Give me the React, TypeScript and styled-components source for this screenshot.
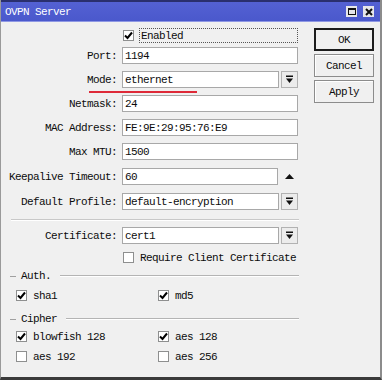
import React from "react";
import styled, { createGlobalStyle } from "styled-components";

const GlobalStyle = createGlobalStyle`
  html, body {
    margin: 0;
    padding: 0;
    background: #ffffff;
  }
  body {
    font-family: "Liberation Mono", "DejaVu Sans Mono", monospace;
    font-size: 11px;
    letter-spacing: -0.6px;
    color: #0c0c0c;
  }
`;

interface FieldDef {
  label: string;
  value: string;
  kind?: "dropdown" | "spin";
  top: number;
  marked?: boolean;
}

const fields: FieldDef[] = [
  { label: "Port:", value: "1194", top: 4 },
  { label: "Mode:", value: "ethernet", kind: "dropdown", top: 7, marked: true },
  { label: "Netmask:", value: "24", top: 7 },
  { label: "MAC Address:", value: "FE:9E:29:95:76:E9", top: 7 },
  { label: "Max MTU:", value: "1500", top: 7 },
  { label: "Keepalive Timeout:", value: "60", kind: "spin", top: 8 },
  { label: "Default Profile:", value: "default-encryption", kind: "dropdown", top: 8 },
];

const CheckIcon = () => (
  <svg width="9" height="9" viewBox="0 0 9 9">
    <path d="M1 4.5 L3.5 7 L8 1.5" fill="none" stroke="#000" strokeWidth="2" />
  </svg>
);

const DropIcon = () => (
  <svg width="9" height="9" viewBox="0 0 9 9">
    <rect x="1" y="0.5" width="7" height="1.5" fill="#111" />
    <path d="M1 3.5 H8 L4.5 8 Z" fill="#111" />
  </svg>
);

const UpIcon = () => (
  <svg width="9" height="5" viewBox="0 0 9 5">
    <path d="M0 5 H9 L4.5 0 Z" fill="#111" />
  </svg>
);

function Check({ checked, label }: { checked: boolean; label: string }) {
  return (
    <CheckLabel>
      <Box>{checked && <CheckIcon />}</Box>
      <span>{label}</span>
    </CheckLabel>
  );
}

function Group({
  title,
  items,
  gap,
}: {
  title: string;
  items: [string, boolean][];
  gap: number;
}) {
  return (
    <>
      <GroupHeader>
        <Dash />
        <span>{title}</span>
        <Rule />
      </GroupHeader>
      <GroupGrid $gap={gap}>
        {items.map(([name, on]) => (
          <Check key={name} checked={on} label={name} />
        ))}
      </GroupGrid>
    </>
  );
}

export default function App() {
  return (
    <>
      <GlobalStyle />
      <Window>
        <TitleBar>
          <Title>OVPN Server</Title>
          <TitleButtons>
            <TitleButton>
              <MaxGlyph />
            </TitleButton>
            <TitleButton>
              <svg width="8" height="8" viewBox="0 0 8 8">
                <path d="M1 1 L7 7 M7 1 L1 7" stroke="#111" strokeWidth="2" />
              </svg>
            </TitleButton>
          </TitleButtons>
        </TitleBar>
        <Body>
          <Form>
            <Row $top={0} $h={15}>
              <span />
              <EnabledBox>
                <Box>
                  <CheckIcon />
                </Box>
                <Focus>Enabled</Focus>
              </EnabledBox>
            </Row>
            {fields.map((f) => (
              <Row key={f.label} $top={f.top} $h={17}>
                <Label>{f.label}</Label>
                <FieldWrap>
                  <Input>{f.value}</Input>
                  {f.kind === "dropdown" && (
                    <DropButton>
                      <DropIcon />
                    </DropButton>
                  )}
                  {f.kind === "spin" && (
                    <SpinArrow>
                      <UpIcon />
                    </SpinArrow>
                  )}
                </FieldWrap>
                {f.marked && <Underline />}
              </Row>
            ))}
            <Separator />
            <Row $top={6} $h={17}>
              <Label>Certificate:</Label>
              <FieldWrap>
                <Input>cert1</Input>
                <DropButton>
                  <DropIcon />
                </DropButton>
              </FieldWrap>
            </Row>
            <Row $top={8} $h={11}>
              <span />
              <Check checked={false} label="Require Client Certificate" />
            </Row>
            <Spacer $h={7} />
            <Group
              title="Auth."
              gap={8}
              items={[
                ["sha1", true],
                ["md5", true],
              ]}
            />
            <Spacer $h={12} />
            <Group
              title="Cipher"
              gap={6}
              items={[
                ["blowfish 128", true],
                ["aes 128", true],
                ["aes 192", false],
                ["aes 256", false],
              ]}
            />
          </Form>
          <Actions>
            <Button $primary>OK</Button>
            <Button>Cancel</Button>
            <Button>Apply</Button>
          </Actions>
        </Body>
      </Window>
    </>
  );
}

const Window = styled.div`
  width: 382px;
  height: 380px;
  box-sizing: border-box;
  background: #f0f0f0;
  border-left: 1px solid #9a9a9a;
  border-right: 2px solid #8c8c8c;
  border-bottom: 3px solid #3a3a3a;
  display: flex;
  flex-direction: column;
  overflow: hidden;
`;

const TitleBar = styled.div`
  height: 22px;
  box-sizing: border-box;
  border-top: 2px solid #2a2f6e;
  border-bottom: 1px solid #8f98e4;
  background: linear-gradient(#5461d3, #4a58cc);
  display: flex;
  align-items: center;
  justify-content: space-between;
  padding: 0 5px 0 4px;
`;

const Title = styled.div`
  color: #ffffff;
  font-size: 11px;
`;

const TitleButtons = styled.div`
  display: flex;
  gap: 6px;
  padding-right: 1px;
`;

const TitleButton = styled.div`
  width: 11px;
  height: 11px;
  background: #e6e6ea;
  display: flex;
  align-items: center;
  justify-content: center;
`;

const MaxGlyph = styled.div`
  width: 8px;
  height: 7px;
  border: 1px solid #111;
  border-top-width: 2px;
  box-sizing: border-box;
`;

const Body = styled.div`
  display: flex;
  padding: 6px 0 0 0;
  gap: 15px;
`;

const Form = styled.div`
  width: 298px;
  display: flex;
  flex-direction: column;
`;

const Row = styled.div<{ $top: number; $h: number }>`
  position: relative;
  display: grid;
  grid-template-columns: 116px 176px;
  column-gap: 5px;
  height: ${(p) => p.$h}px;
  margin-top: ${(p) => p.$top}px;
  align-items: center;
`;

const Label = styled.div`
  text-align: right;
  white-space: nowrap;
`;

const FieldWrap = styled.div`
  display: flex;
  height: 100%;
  gap: 2px;
  align-items: center;
`;

const Input = styled.div`
  flex: 1;
  height: 100%;
  box-sizing: border-box;
  background: #ffffff;
  border: 1px solid #a8a8a8;
  padding-left: 2px;
  display: flex;
  align-items: center;
  white-space: nowrap;
`;

const DropButton = styled.div`
  width: 17px;
  height: 100%;
  box-sizing: border-box;
  background: #ececec;
  border: 1px solid #b2b2b2;
  display: flex;
  align-items: center;
  justify-content: center;
`;

const SpinArrow = styled.div`
  width: 17px;
  display: flex;
  justify-content: center;
  padding-left: 1px;
`;

const Underline = styled.div`
  position: absolute;
  left: 88px;
  bottom: -5px;
  width: 108px;
  height: 2px;
  background: #de2a38;
`;

const EnabledBox = styled.div`
  display: flex;
  align-items: center;
  gap: 5px;
  height: 100%;
  padding-left: 1px;
`;

const Focus = styled.div`
  flex: 1;
  height: 100%;
  box-sizing: border-box;
  border: 1px dotted #555;
  display: flex;
  align-items: center;
  padding-left: 1px;
`;

const Box = styled.div`
  width: 11px;
  height: 11px;
  box-sizing: border-box;
  background: #ffffff;
  border: 1px solid #8e8f8f;
  display: flex;
  align-items: center;
  justify-content: center;
  flex-shrink: 0;
`;

const CheckLabel = styled.div`
  display: flex;
  align-items: center;
  gap: 6px;
  height: 11px;
  white-space: nowrap;
  padding-left: 1px;
`;

const Separator = styled.div`
  margin: 9px 0 0 10px;
  height: 1px;
  background: #c8c8c8;
  border-bottom: 1px solid #ffffff;
`;

const Spacer = styled.div<{ $h: number }>`
  height: ${(p) => p.$h}px;
`;

const GroupHeader = styled.div`
  display: flex;
  align-items: center;
  height: 12px;
  padding-left: 9px;
  gap: 5px;
`;

const Dash = styled.div`
  width: 6px;
  height: 1px;
  background: #a0a0a0;
`;

const Rule = styled.div`
  flex: 1;
  height: 1px;
  margin-left: 4px;
  background: #b4b4b4;
  border-bottom: 1px solid #ffffff;
`;

const GroupGrid = styled.div<{ $gap: number }>`
  display: grid;
  grid-template-columns: 142px 142px;
  row-gap: 9px;
  padding: ${(p) => p.$gap}px 0 0 14px;
`;

const Actions = styled.div`
  display: flex;
  flex-direction: column;
  gap: 3px;
`;

const Button = styled.div<{ $primary?: boolean }>`
  width: 60px;
  height: 23px;
  box-sizing: border-box;
  background: #f0f0f0;
  border: ${(p) => (p.$primary ? "2px solid #1c1c1c" : "1px solid #8c8c8c")};
  box-shadow: ${(p) => (p.$primary ? "none" : "inset 1px 1px 0 #ffffff")};
  display: flex;
  align-items: center;
  justify-content: center;
`;
